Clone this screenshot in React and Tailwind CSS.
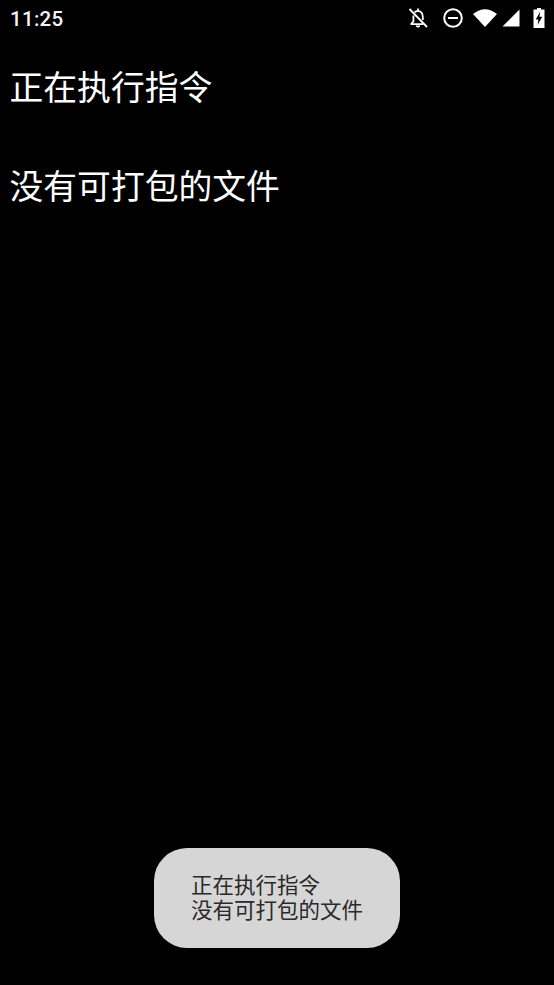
import React from 'react';

const cjk = 'font-["Noto_Sans_CJK_SC","Noto_Sans_CJK_JP",sans-serif]';

function StatusIcons() {
    return (
        <div className="flex items-center mb-[2px]">
            {/* notifications off */}
            <svg width="22" height="22" viewBox="0 0 22 22" fill="none" stroke="white" strokeWidth="1.8">
                <path d="M7.5 5.5 Q8.8 4 11 3.8 Q15.8 4.5 15.8 10 V13" />
                <path d="M6.4 8.5 V14.5 L4.4 16.6 V17.2 H16" />
                <path d="M9 19 Q11 21.5 13 19 Z" fill="white" strokeWidth="1" />
                <path d="M11 1.5 V4" />
                <path d="M2.5 2 L20 20" />
            </svg>
            {/* do not disturb */}
            <svg width="22" height="22" viewBox="0 0 22 22" fill="none" stroke="white" className="ml-[13px]">
                <circle cx="11" cy="11" r="8.8" strokeWidth="2" />
                <path d="M6 11 H16" strokeWidth="2" />
            </svg>
            {/* wifi */}
            <svg width="24" height="18" viewBox="0 0 24 18" fill="white" className="ml-[9px]">
                <path d="M0 5 Q12 -4.5 24 5 L12 18 Z" />
            </svg>
            {/* signal */}
            <svg width="18" height="18" viewBox="0 0 18 18" fill="white" className="ml-[5px]">
                <path d="M17.5 0.5 V17.5 H0.5 Z" />
            </svg>
            {/* battery charging */}
            <svg width="12" height="20" viewBox="0 0 12 20" className="ml-[13px]">
                <path d="M4 0 H8 V1.5 H11.5 V20 H0.5 V1.5 H4 Z" fill="white" />
                <path d="M7.2 3.5 L2.8 11.5 H5.4 L4.6 17 L9.2 8.8 H6.4 Z" fill="black" />
            </svg>
        </div>
    );
}

export default function App() {
    return (
        <div className="flex flex-col h-[985px] bg-black">
            <div className="flex items-center justify-between h-[38px] pl-[10px] pr-[9px]">
                <span className="font-['Roboto',sans-serif] text-[20.5px] font-medium tracking-[0.3px] text-[#f5f5f5]">11:25</span>
                <StatusIcons />
            </div>

            <div className={`pl-[9.5px] pr-[10px] pt-[25px] text-[33.8px] leading-[45px] text-white ${cjk}`}>
                <p>正在执行指令</p>
                <p className="mt-[54px]">没有可打包的文件</p>
            </div>

            <div className="mt-auto mb-[37px] self-center flex flex-col justify-center w-[246px] h-[100px] pl-[37px] pb-[4px] rounded-[33px] bg-[#d6d6d6]">
                <p className={`text-[21.5px] leading-[25px] text-[#2a2a2a] ${cjk}`}>
                    正在执行指令
                    <br />
                    没有可打包的文件
                </p>
            </div>
        </div>
    );
}
